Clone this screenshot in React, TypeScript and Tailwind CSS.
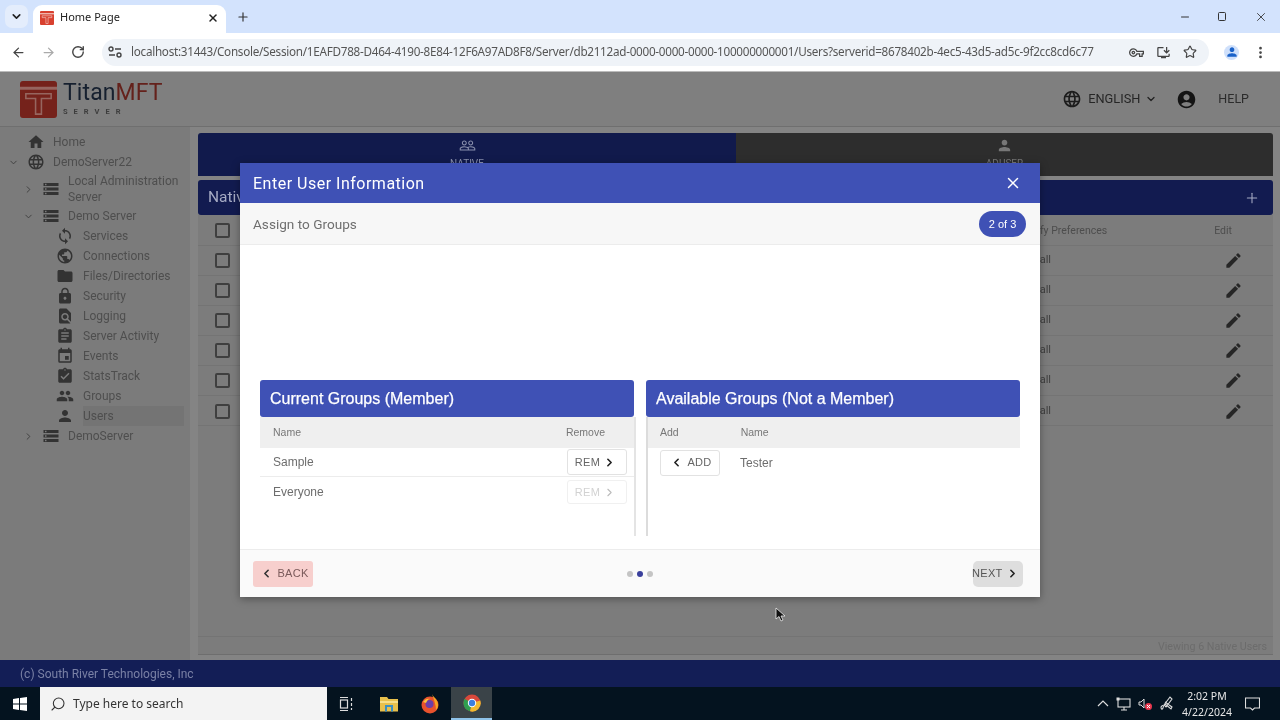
import type { ReactNode } from "react";
import { ArrowLeft, ArrowRight, ChevronDown, ChevronLeft, ChevronRight, EllipsisVertical, Minus, Plus, RotateCw, Search, Star, X } from "lucide-react";
import {
  MdAccountCircle, MdAssignment, MdAssignmentTurnedIn, MdEdit, MdEvent, MdFindInPage, MdFolder, MdGroup,
  MdHome, MdLanguage, MdLock, MdPerson, MdPublic, MdStorage, MdSync, MdPeopleOutline, MdOutlineVpnKey, MdInstallDesktop,
} from "react-icons/md";

type NavItem = { label: ReactNode; icon: typeof MdHome; depth: 0 | 1 | 2; caret?: "open" | "closed"; active?: boolean; tall?: boolean };

const NAV: NavItem[] = [
  { label: "Home", icon: MdHome, depth: 0 },
  { label: "DemoServer22", icon: MdLanguage, depth: 0, caret: "open" },
  { label: <>Local Administration<br />Server</>, icon: MdStorage, depth: 1, caret: "closed", tall: true },
  { label: "Demo Server", icon: MdStorage, depth: 1, caret: "open" },
  { label: "Services", icon: MdSync, depth: 2 },
  { label: "Connections", icon: MdPublic, depth: 2 },
  { label: "Files/Directories", icon: MdFolder, depth: 2 },
  { label: "Security", icon: MdLock, depth: 2 },
  { label: "Logging", icon: MdFindInPage, depth: 2 },
  { label: "Server Activity", icon: MdAssignment, depth: 2 },
  { label: "Events", icon: MdEvent, depth: 2 },
  { label: "StatsTrack", icon: MdAssignmentTurnedIn, depth: 2 },
  { label: "Groups", icon: MdGroup, depth: 2 },
  { label: "Users", icon: MdPerson, depth: 2, active: true },
  { label: "DemoServer", icon: MdStorage, depth: 1, caret: "closed" },
];

function TitanMark({ size, fill, line }: { size: number; fill: string; line: string }) {
  return (
    <svg width={size} height={size} viewBox="0 0 38 38">
      <rect width="38" height="38" rx="3" fill={fill} />
      <path d="M0 6h38v3H0z" fill={line} />
      <path d="M6 13h26v5H22v16h-6V18H6z" fill="none" stroke={line} strokeWidth="1.6" />
    </svg>
  );
}

function ChromeIcon() {
  return (
    <svg width="18" height="18" viewBox="0 0 18 18">
      <circle cx="9" cy="9" r="8.5" fill="#d9483b" />
      <path d="M9 9 1.6 4.8A8.5 8.5 0 0 0 7 17.3Z" fill="#2f9e4f" />
      <path d="M9 9 7 17.3A8.5 8.5 0 0 0 17.3 6.5Z" fill="#f2b92f" />
      <circle cx="9" cy="9" r="4.2" fill="#fff" />
      <circle cx="9" cy="9" r="3.2" fill="#3d7fe0" />
    </svg>
  );
}

function FirefoxIcon() {
  return (
    <svg width="18" height="20" viewBox="0 0 18 20">
      <circle cx="9" cy="11" r="8.5" fill="#e8522d" />
      <path d="M11 0c1 3 6 5 6 11 0 2-1 4-2 5 0-5-2-10-4-16Z" fill="#f5a623" />
      <circle cx="8.5" cy="10" r="4" fill="#6b3fa8" />
      <path d="M2 8c2-3 5-4 7-3-2 0-3 2-4 4Z" fill="#f9c43a" />
    </svg>
  );
}

function ExplorerIcon() {
  return (
    <svg width="18" height="16" viewBox="0 0 18 16">
      <path d="M0 1h7l1.5 2H18v12.5H0z" fill="#e8c04c" />
      <path d="M0 5h18v2H0z" fill="#f7df8b" />
      <path d="M5 9h8v6.5h-2V11H7v4.5H5z" fill="#3a8fc4" />
    </svg>
  );
}

function TableRows() {
  return (
    <>
      {[0, 1, 2, 3, 4, 5].map((i) => (
        <div key={i} className={`h-[30px] flex items-center border-b border-[#747474] ${i === 5 ? "pt-[1px]" : ""}`}>
          <span className="ml-[17px] w-[15px] h-[15px] rounded-[2px] border-2 border-[#3f3f3f]" />
          <span className="ml-auto text-[11px] text-[#3f3f3f] mr-[173px]">all</span>
          <MdEdit className="mr-[30px] text-[#262626]" size={19} />
        </div>
      ))}
    </>
  );
}

function Sidebar() {
  return (
    <aside className="w-[190px] shrink-0 pt-[5px] bg-[#7b7b7b] text-[12px] leading-[16px] text-[#4e4e4e] font-['Roboto',sans-serif]">
      {NAV.map((n, i) => {
        const Icon = n.icon;
        const left = n.depth === 0 ? "pl-[27px]" : n.depth === 1 ? "pl-[42px]" : "pl-[56px]";
        const caretLeft = n.depth === 0 ? "left-[8px]" : "left-[23px]";
        return (
          <div key={i} className={`relative flex items-center ${n.tall ? "h-[34px]" : "h-[20px]"} ${left}`}>
            {n.caret === "open" && <ChevronDown size={11} strokeWidth={2} className={`absolute ${caretLeft} text-[#3d3d3d]`} />}
            {n.caret === "closed" && <ChevronRight size={11} strokeWidth={2} className={`absolute ${caretLeft} text-[#3d3d3d]`} />}
            <Icon size={18} className="shrink-0 text-[#333]" />
            <span className={`flex-1 self-stretch flex items-center ${n.depth === 1 ? "ml-[8px]" : n.depth === 0 ? "ml-[8px]" : "ml-[9px]"} ${n.active ? "bg-[#747474] mr-[6px]" : ""}`}>
              <span>{n.label}</span>
            </span>
          </div>
        );
      })}
    </aside>
  );
}

function GroupPanel({ title, children, head, side }: { title: string; children: ReactNode; head: ReactNode; side: "left" | "right" }) {
  return (
    <div className="flex-1 min-w-0 flex flex-col">
      <div className="h-[37px] rounded-[3px] bg-[#3f51b5] text-white text-[16px] flex items-center px-[10px] font-['Liberation_Sans',sans-serif] [-webkit-text-stroke:0.25px_white]">
        {title}
      </div>
      <div className={side === "left" ? "border-r-2 border-[#e4e4e4] -mr-[2px]" : "border-l-2 border-[#dcdcdc]"}>
        <div className="h-[31px] bg-[#efefef] flex items-center text-[10.5px] text-[#777] shrink-0">{head}</div>
        <div className="h-[88px] bg-white">{children}</div>
      </div>
    </div>
  );
}

export default function App() {
  return (
    <div className="relative w-[1280px] h-[720px] overflow-hidden flex flex-col bg-[#848484] font-['Liberation_Sans',sans-serif] blur-[0.5px]">
      {/* browser tab strip */}
      <div className="h-[33px] shrink-0 bg-[#d3e3fd] flex items-center text-[#222] font-['Noto_Sans',sans-serif]">
        <div className="ml-[5px] w-[23px] h-[23px] rounded-[7px] bg-[#e4edfc] flex items-center justify-center">
          <ChevronDown size={13} strokeWidth={3} />
        </div>
        <div className="ml-[5px] h-[28px] self-end w-[193px] bg-white rounded-t-[9px] flex items-center pl-[7px] pr-[7px] pb-[3px]">
          <TitanMark size={14} fill="#d8402f" line="#f6d5cf" />
          <span className="ml-[6px] text-[11px] flex-1">Home Page</span>
          <X size={12} strokeWidth={3} />
        </div>
        <Plus size={14} strokeWidth={2} className="ml-[10px] text-[#333]" />
        <div className="ml-auto flex items-center text-[#333]">
          <Minus size={12} className="mr-[27px]" />
          <div className="w-[8px] h-[9px] border-[1.5px] border-[#333] rounded-[1.5px] mr-[28px]" />
          <X size={14} strokeWidth={1.5} className="mr-[12px]" />
        </div>
      </div>
      {/* toolbar */}
      <div className="h-[39px] shrink-0 bg-white flex items-center text-[#444] border-b border-[#bbbbbb]">
        <ArrowLeft size={15} strokeWidth={2} className="ml-[11px]" />
        <ArrowRight size={15} strokeWidth={2} className="ml-[15px] text-[#aaa]" />
        <RotateCw size={14} strokeWidth={2.4} className="ml-[15px]" />
        <div className="ml-[17px] w-[1107px] h-[27px] rounded-full bg-[#eff3f8] flex items-center pl-[6px] pr-[9px]">
          <svg width="14" height="12" viewBox="0 0 14 12" className="shrink-0">
            <circle cx="3" cy="3" r="2" fill="none" stroke="#444" strokeWidth="1.4" />
            <path d="M7 3h6M1 9h6" stroke="#444" strokeWidth="1.4" />
            <circle cx="11" cy="9" r="2" fill="none" stroke="#444" strokeWidth="1.4" />
          </svg>
          <span className="ml-[9px] text-[11.7px] text-[#555] whitespace-nowrap font-['Noto_Sans',sans-serif] tracking-[-0.27px]">
            localhost:31443/Console/Session/1EAFD788-D464-4190-8E84-12F6A97AD8F8/Server/db2112ad-0000-0000-0000-100000000001/Users?serverid=8678402b-4ec5-43d5-ad5c-9f2cc8cd6c77
          </span>
          <MdOutlineVpnKey size={15} className="ml-auto shrink-0 mr-[12px]" />
          <MdInstallDesktop size={15} className="shrink-0 mr-[12px]" />
          <Star size={14} strokeWidth={2} className="shrink-0 mr-[3px]" />
        </div>
        <div className="ml-[15px] w-[15px] h-[15px] rounded-full bg-[#cfe0fb] flex items-center justify-center">
          <MdPerson size={14} className="text-[#1a62c9]" />
        </div>
        <EllipsisVertical size={15} strokeWidth={2.4} className="ml-[14px]" />
      </div>
      {/* app header */}
      <header className="h-[55px] shrink-0 bg-[#7f7f7f] flex items-center border-b border-[#6f6f6f] font-['Roboto',sans-serif]">
        <div className="ml-[20px]">
          <TitanMark size={37} fill="#75221b" line="#96655f" />
        </div>
        <div className="ml-[6px] flex flex-col gap-[5px]">
          <span className="text-[23px] leading-[20px] text-[#16202f] tracking-[0.1px]">
            Titan<span className="text-[#64211b]">MFT</span>
          </span>
          <span className="text-[7.5px] leading-[8px] font-bold text-[#3d3d3d] tracking-[6px]">SERVER</span>
        </div>
        <MdLanguage size={20} className="ml-auto text-[#1c1c1c]" />
        <span className="ml-[6px] text-[12.8px] text-[#262626]">ENGLISH</span>
        <ChevronDown size={12} strokeWidth={2.6} className="ml-[5px] text-[#222]" />
        <MdAccountCircle size={21} className="ml-[19px] text-[#141414]" />
        <span className="ml-[21px] mr-[31px] text-[12.5px] text-[#2c2c2c]">HELP</span>
      </header>
      {/* app body */}
      <div className="flex-1 min-h-0 flex">
        <Sidebar />
        <main className="relative flex-1 ml-[8px] mr-[7px] mt-[6px] mb-[5px] flex flex-col font-['Roboto',sans-serif]">
          <div className="h-[43px] flex shrink-0">
            <div className="w-[538px] rounded-tl-[3px] bg-[#111a4c] flex flex-col items-center pt-[4px] text-[#8a90ad]">
              <MdPeopleOutline size={17} />
              <span className="text-[10px] leading-[12px] mt-[4px]">NATIVE</span>
            </div>
            <div className="flex-1 rounded-tr-[3px] bg-[#2d2d2d] flex flex-col items-center pt-[4px] text-[#777]">
              <MdPerson size={17} />
              <span className="text-[10px] leading-[12px] mt-[4px]">ADUSER</span>
            </div>
          </div>
          <div className="h-[35px] mt-[4px] shrink-0 rounded-[3px] bg-[#121b50] flex items-center px-[10px] text-[#a6abc4] text-[15.5px]">
            Nativ
            <Plus size={16} strokeWidth={1.6} className="ml-auto mr-[3px]" />
          </div>
          <div className="flex-1 min-h-0 flex flex-col bg-[#7c7c7c] border-b border-[#6e6e6e]">
            <div className="h-[31px] pt-[1px] shrink-0 flex items-center border-b border-[#747474] text-[10.5px] text-[#4d4d4d]">
              <span className="ml-[17px] w-[15px] h-[15px] rounded-[2px] border-2 border-[#3f3f3f]" />
              <span className="ml-auto mr-[107px]">Notify Preferences</span>
              <span className="mr-[41px]">Edit</span>
            </div>
            <TableRows />
            <div className="mt-auto h-[18px] pt-[3px] flex items-center justify-end pr-[6px] text-[10.7px] text-[#6c6c6c] border-t border-[#747474]">
              Viewing 6 Native Users
            </div>
          </div>
        </main>
      </div>
      {/* footer */}
      <footer className="h-[27px] shrink-0 bg-[#131e56] flex items-center pl-[20px] text-[12px] text-[#7a81a5] font-['Roboto',sans-serif]">
        (c) South River Technologies, Inc
      </footer>
      {/* windows taskbar */}
      <div className="h-[33px] shrink-0 bg-[#04131f] flex items-center text-white">
        <div className="w-[40px] flex justify-center">
          <svg width="14" height="14" viewBox="0 0 14 14" fill="#fff">
            <path d="M0 2 6 1v5.6H0zM7 .9 14 0v6.6H7zM0 7.4h6V13l-6-1zM7 7.4h7V14l-7-1z" />
          </svg>
        </div>
        <div className="w-[287px] h-full bg-[#f3f3f3] flex items-center pl-[10px] text-[#333]">
          <Search size={16} strokeWidth={1.6} className="-scale-x-100" />
          <span className="ml-[7px] text-[12px] font-['Noto_Sans',sans-serif]">Type here to search</span>
        </div>
        <div className="w-[38px] flex justify-center">
          <svg width="14" height="14" viewBox="0 0 14 14" fill="none" stroke="#ddd" strokeWidth="1.2">
            <path d="M1 .5h8M1 13.5h8" />
            <rect x="1.5" y="3" width="7" height="8" />
            <path d="M12.5 1v3M12.5 6v3M12.5 11v2" />
          </svg>
        </div>
        <div className="w-[48px] flex justify-center"><ExplorerIcon /></div>
        <div className="w-[38px] pr-[4px] flex justify-center"><FirefoxIcon /></div>
        <div className="w-[41px] h-full bg-[#3a4348] flex justify-center items-center border-b-2 border-[#8fc3ea]"><ChromeIcon /></div>
        <div className="ml-auto flex items-center">
          <svg width="12" height="7" viewBox="0 0 12 7" fill="none" stroke="#ddd" strokeWidth="1.2" className="mr-[7px]"><path d="m1 6 5-5 5 5" /></svg>
          <svg width="15" height="14" viewBox="0 0 15 14" fill="none" stroke="#ddd" strokeWidth="1.1" className="mr-[7px]">
            <rect x="2" y="2" width="12" height="8" /><path d="M8 10v3M5 13h6" /><rect x="0.5" y="0.5" width="3" height="3" fill="#ddd" stroke="none" />
          </svg>
          <svg width="15" height="14" viewBox="0 0 15 14" className="mr-[7px]">
            <path d="M1 5h2l3-3v9L3 8H1z" fill="none" stroke="#ddd" />
            <circle cx="10.5" cy="9.5" r="3.5" fill="#e8384f" />
            <path d="m9 8 3 3m0-3-3 3" stroke="#fff" />
          </svg>
          <svg width="15" height="15" viewBox="0 0 15 15" fill="none" stroke="#ddd" strokeWidth="1.1" className="mr-[3px]">
            <path d="M1 11c2-3 3-1 2 1s-2 1-2-1Zm3-2 6-8 2 2-6 8ZM5 6l7 5-1 2-6-5" />
          </svg>
          <div className="w-[58px] flex flex-col items-center text-[10.5px] leading-[16px] font-['Noto_Sans',sans-serif] text-[#e6e6e6]">
            <span>2:02 PM</span>
            <span>4/22/2024</span>
          </div>
          <svg width="15" height="14" viewBox="0 0 15 14" fill="none" stroke="#ddd" strokeWidth="1.1" className="ml-[9px] mr-[20px]">
            <path d="M.5 1h14v10H9.5L7.5 13l-2-2h-5z" />
          </svg>
        </div>
      </div>

      {/* modal */}
      <div className="absolute left-[240px] top-[163px] w-[800px] h-[434px] flex flex-col bg-white shadow-[0_2px_8px_rgba(0,0,0,0.35)] font-['Liberation_Sans',sans-serif]">
        <div className="h-[40px] shrink-0 bg-[#3f51b5] flex items-center pl-[13px] pr-[18px] text-white">
          <span className="pt-[1px] text-[16px] font-['Roboto',sans-serif] tracking-[0.5px]">Enter User Information</span>
          <X size={18} strokeWidth={2} className="ml-auto" />
        </div>
        <div className="h-[42px] shrink-0 pt-[1px] bg-[#f7f7f7] border-b border-[#ececec] flex items-center pl-[13px] pr-[14px]">
          <span className="text-[13.6px] text-[#6f6f6f] font-['Roboto',sans-serif]">Assign to Groups</span>
          <span className="ml-auto w-[47px] h-[26px] rounded-full bg-[#3f51b5] text-white text-[11px] flex items-center justify-center">2 of 3</span>
        </div>
        <div className="flex-1 min-h-0 flex items-end gap-[12px] pl-[20px] pr-[20px] pb-[13px]">
          <GroupPanel
            side="left"
            title="Current Groups (Member)"
            head={
              <>
                <span className="ml-[13px]">Name</span>
                <span className="ml-auto mr-[29px]">Remove</span>
              </>
            }
          >
            <div className="h-[29px] flex items-center justify-between border-b border-[#ececec] pl-[13px] pr-[7px] text-[12px] text-[#6d6d6d]">
              Sample
              <span className="w-[60px] h-[26px] pr-[3px] rounded-[3px] border border-[#e2e2e2] flex items-center justify-center gap-[3px] text-[11px] text-[#666] tracking-[0.3px]">
                REM <ChevronRight size={13} strokeWidth={3} className="text-[#222]" />
              </span>
            </div>
            <div className="h-[30px] flex items-center justify-between pl-[13px] pr-[7px] text-[12px] text-[#6d6d6d]">
              Everyone
              <span className="w-[60px] h-[24px] pr-[3px] rounded-[3px] border border-[#f0f0f0] flex items-center justify-center gap-[3px] text-[11px] text-[#d2d2d2] tracking-[0.3px]">
                REM <ChevronRight size={13} strokeWidth={2} className="text-[#bbb]" />
              </span>
            </div>
          </GroupPanel>
          <GroupPanel
            side="right"
            title="Available Groups (Not a Member)"
            head={
              <>
                <span className="ml-[12px]">Add</span>
                <span className="ml-[62px]">Name</span>
              </>
            }
          >
            <div className="h-[29px] flex items-center pl-[12px] text-[12px] text-[#6d6d6d]">
              <span className="w-[60px] h-[26px] pl-[2px] rounded-[3px] border border-[#e2e2e2] flex items-center justify-center gap-[4px] text-[11px] text-[#666] tracking-[0.3px]">
                <ChevronLeft size={13} strokeWidth={3} className="text-[#222]" /> ADD
              </span>
              <span className="ml-[20px]">Tester</span>
            </div>
          </GroupPanel>
        </div>
        <div className="h-[48px] shrink-0 bg-[#fafafa] border-t border-[#ececec] flex items-center pl-[13px] pr-[17px]">
          <span className="w-[60px] h-[26px] pl-[3px] rounded-[3px] bg-[#f7cfcd] flex items-center justify-center gap-[4px] text-[11px] text-[#7a5a5a] tracking-[0.3px]">
            <ChevronLeft size={13} strokeWidth={3} className="text-[#333]" /> BACK
          </span>
          <div className="flex-1 flex justify-center items-center gap-[4px] pr-[6px]">
            <span className="w-[6px] h-[6px] rounded-full bg-[#c4c4c4]" />
            <span className="w-[6px] h-[6px] rounded-full bg-[#3a3f9c]" />
            <span className="w-[6px] h-[6px] rounded-full bg-[#c4c4c4]" />
          </div>
          <span className="w-[50px] h-[26px] rounded-[5px] bg-[#dedede] flex items-center gap-[3px] text-[11px] text-[#555] tracking-[0.3px]">
            <span className="-ml-[1px]">NEXT</span> <ChevronRight size={13} strokeWidth={3} className="text-[#222]" />
          </span>
        </div>
      </div>
      {/* cursor */}
      <svg width="11" height="16" viewBox="0 0 11 16" className="absolute left-[775px] top-[607px]">
        <path d="M1 1v11l3-2.5L6 14l2-1-2-4h4z" fill="#111" stroke="#eee" strokeWidth="0.8" />
      </svg>
    </div>
  );
}
